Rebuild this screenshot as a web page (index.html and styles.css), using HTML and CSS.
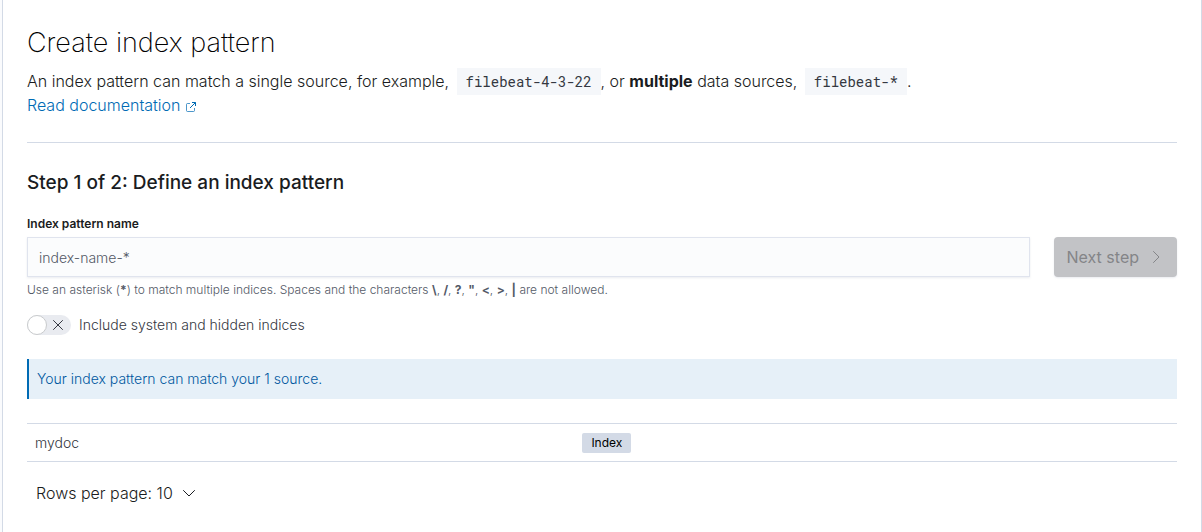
FILE: index.html
```html
<!DOCTYPE html>
<html lang="en">
<head>
<meta charset="utf-8">
<title>Create index pattern</title>
<link rel="stylesheet" href="styles.css">
</head>
<body>
<main class="panel">
  <header class="intro">
    <h1 class="title">Create index pattern</h1>
    <p class="lead">An index pattern can match a single source, for example, <code class="code">filebeat-4-3-22</code>, or <strong>multiple</strong> data sources, <code class="code">filebeat-*</code>.<br>
      <a class="link" href="#">Read documentation <svg class="link-icon" viewBox="0 0 12 12" width="12" height="12" fill="none" stroke="currentColor" aria-hidden="true"><path d="M5 2.500H2.500a1 1 0 0 0-1 1v6a1 1 0 0 0 1 1h6a1 1 0 0 0 1-1V7" opacity=".7"/><path d="M7 1.500h3.500V5M10.500 1.500L5 7"/></svg></a></p>
  </header>
  <section class="step">
    <h2 class="subtitle">Step 1 of 2: Define an index pattern</h2>
    <form class="form">
      <div class="form-row">
        <div class="field">
          <label class="label" for="pattern">Index pattern name</label>
          <input class="input" id="pattern" type="text" placeholder="index-name-*">
          <p class="help">Use an asterisk (<strong>*</strong>) to match multiple indices. Spaces and the characters <strong>\</strong>, <strong>/</strong>, <strong>?</strong>, <strong>"</strong>, <strong>&lt;</strong>, <strong>&gt;</strong>, <strong>|</strong> are not allowed.</p>
        </div>
        <button class="next" type="button" disabled>Next step <svg viewBox="0 0 16 16" width="16" height="16" fill="none" stroke="currentColor" stroke-linecap="round" aria-hidden="true"><path d="M5.500 2.500L11 8l-5.500 5.500"/></svg></button>
      </div>
      <label class="switch">
        <input class="switch-input" type="checkbox" role="switch">
        <span class="track"><span class="thumb"></span><svg viewBox="0 0 16 16" width="16" height="16" fill="none" stroke="currentColor" stroke-linecap="round" aria-hidden="true"><path d="M3.500 3.500l9 9M12.500 3.500l-9 9"/></svg></span>
        Include system and hidden indices
      </label>
    </form>
    <div class="callout">Your index pattern can match your 1 source.</div>
    <table class="table">
      <tbody><tr><td>mydoc</td><td><span class="badge">Index</span></td></tr></tbody>
    </table>
    <button class="pager" type="button">Rows per page: 10 <svg viewBox="0 0 16 16" width="16" height="16" fill="none" stroke="currentColor" stroke-linecap="round" aria-hidden="true"><path d="M2.500 5.500L8 11l5.500-5.500"/></svg></button>
  </section>
</main>
</body>
</html>
```
FILE: styles.css
```css
* {
  box-sizing: border-box;
}

body {
  margin: 0;
  padding-left: 2px;
  background: #fafbfd;
  color: #343741;
  font: 300 14px/24px Inter, "Liberation Sans", sans-serif;
}

h1, h2, p {
  margin: 0;
}

button, input {
  font: inherit;
}

strong {
  font-weight: 700;
}

.panel {
  min-height: 100vh;
  padding: 24px;
  background: #fff;
  border: solid #d3dae6;
  border-width: 0 1px;
}

.intro {
  padding-bottom: 25px;
  border-bottom: 1px solid #d3dae6;
}

.title {
  margin-bottom: 7px;
  color: #000;
  font-size: 27px;
  font-weight: 200;
  line-height: 38px;
}

.lead {
  color: #1a1c21;
  font-size: 16px;
}

.code {
  margin-left: 3px;
  padding: 4px 9px;
  background: #f5f7fa;
  color: #343741;
  font: 400 14px/20px "Roboto Mono", "DejaVu Sans Mono", monospace;
}

.link {
  color: #006bb4;
  text-decoration: none;
}

.link-icon {
  vertical-align: -2px;
}

.step {
  padding-top: 24px;
}

.subtitle {
  color: #1a1c21;
  font-size: 19px;
  font-weight: 500;
  line-height: 32px;
}

.form {
  padding-top: 16px;
}

.form-row {
  display: flex;
  gap: 24px;
}

.field {
  flex: 1;
}

.label {
  display: block;
  padding-bottom: 4px;
  color: #1a1c21;
  font-size: 12px;
  font-weight: 600;
  line-height: 18px;
}

.input {
  display: block;
  width: 100%;
  height: 40px;
  padding: 0 11px;
  border: 1px solid #e0e4ee;
  border-radius: 0;
  background: #fbfcfd;
  box-shadow: 0 1px 2px #98a2b333;
  color: #343741;
}

.input::placeholder {
  color: #535966;
  opacity: 1;
}

.help {
  padding-top: 4px;
  color: #535966;
  font-size: 12px;
  line-height: 18px;
}

.next {
  display: flex;
  align-items: center;
  gap: 9px;
  height: 40px;
  margin-top: 22px;
  padding: 0 13px;
  border: 0;
  border-radius: 4px;
  background: #c2c3c6;
  box-shadow: 0 1px 2px #98a2b333;
  color: #848588;
  font-size: 16px;
  font-weight: 400;
}

.switch {
  display: flex;
  align-items: center;
  gap: 8px;
  width: max-content;
  margin-top: 14px;
}

.switch-input {
  position: absolute;
  opacity: 0;
}

.track {
  display: flex;
  align-items: center;
  gap: 3px;
  width: 44px;
  height: 20px;
  border-radius: 10px;
  background: #e9ebf0;
}

.thumb {
  width: 20px;
  height: 20px;
  border: 1px solid #c9cbcd;
  border-radius: 50%;
  background: #fff;
}

.callout {
  margin: 22px 0 24px;
  padding: 8px;
  border-left: 2px solid #006bb4;
  background: #e6f0f8;
  color: #0058a0;
}

.table {
  width: 100%;
  border-collapse: collapse;
  table-layout: fixed;
}

.table td {
  height: 38px;
  padding: 0 8px;
  border: solid #d3dae6;
  border-width: 1px 0;
  vertical-align: middle;
}

.table td:first-child {
  width: 47.6%;
}

.badge {
  display: block;
  width: max-content;
  padding: 0 9px;
  border-radius: 2px;
  background: #d3dae6;
  color: #000;
  font-size: 12px;
  font-weight: 400;
  line-height: 20px;
}

.pager {
  display: flex;
  align-items: center;
  gap: 8px;
  margin-top: 11px;
  padding: 8px 9px;
  border: 0;
  background: none;
  color: #1a1c21;
  font-size: 16px;
}
```
